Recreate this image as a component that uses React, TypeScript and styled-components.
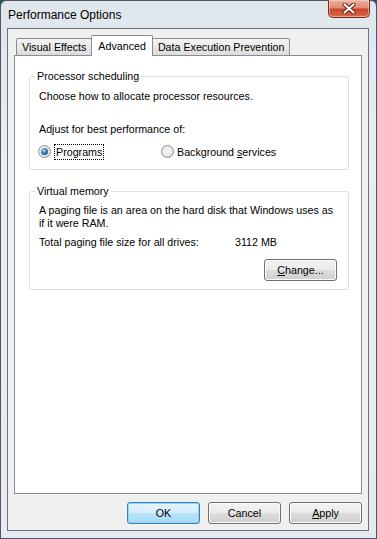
import styled, { createGlobalStyle } from "styled-components";

const GlobalStyle = createGlobalStyle`
  html, body {
    margin: 0;
    padding: 0;
    background: #24566a;
  }
  body {
    font-family: "Liberation Sans", Arial, sans-serif;
    font-size: 10.7px;
    color: #000;
  }
`;

const Frame = styled.div`
  width: 377px;
  height: 539px;
  box-sizing: border-box;
  display: flex;
  flex-direction: column;
  background: linear-gradient(180deg, #dfe6ec 0%, #eaeef2 30%, #e7ebef 100%);
  border: 1px solid #4f5862;
  border-right-color: #2c5f70;
  border-radius: 6px 6px 0 0;
  padding: 0 7px 7px 6px;
`;

const TitleBar = styled.div`
  height: 27px;
  display: flex;
  align-items: center;
  padding-left: 1px;
`;

const Caption = styled.span`
  font-size: 12px;
  color: #000;
  flex: 1;
`;

const CloseBtn = styled.div`
  align-self: flex-start;
  margin-top: -1px;
  margin-right: -1px;
  width: 42px;
  height: 18px;
  box-sizing: border-box;
  border: 1px solid #7a2c1e;
  border-top: none;
  border-radius: 0 0 5px 5px;
  background: linear-gradient(180deg, #eab2a3 0%, #df8a73 45%, #c9482c 55%, #d86a4c 100%);
  box-shadow: inset 0 0 0 1px rgba(255, 220, 210, 0.5);
  display: flex;
  align-items: center;
  justify-content: center;
`;

const Client = styled.div`
  flex: 1;
  border: 1px solid #6b747d;
  background: #f0f0f0;
  display: flex;
  flex-direction: column;
  padding: 6px 6px 0 6px;
`;

const TabStrip = styled.div`
  height: 20px;
  display: flex;
  align-items: flex-end;
  padding-left: 2px;
`;

const Tab = styled.div<{ $active?: boolean }>`
  box-sizing: border-box;
  height: ${({ $active }) => ($active ? 21 : 17)}px;
  margin-bottom: ${({ $active }) => ($active ? -1 : 0)}px;
  padding: 0 ${({ $active }) => ($active ? 6 : 5)}px;
  display: flex;
  align-items: center;
  border: 1px solid #898c95;
  border-bottom: none;
  border-radius: 2px 2px 0 0;
  background: ${({ $active }) =>
    $active ? "#fff" : "linear-gradient(180deg, #f4f4f4 0%, #e9e9e9 50%, #dcdcdc 100%)"};
  position: relative;
  z-index: ${({ $active }) => ($active ? 2 : 1)};
  & + & {
    margin-left: -1px;
  }
`;

const Panel = styled.div`
  height: 439px;
  box-sizing: border-box;
  border: 1px solid #898c95;
  background: #fff;
  padding: 13px 12px 0 14px;
`;

const Group = styled.fieldset<{ $gap?: number }>`
  margin: ${({ $gap }) => $gap ?? 0}px 0 0 0;
  width: 320px;
  box-sizing: border-box;
  border: 1px solid #d5dfe5;
  border-radius: 3px;
  padding: 0 11px 0 9px;
`;

const Legend = styled.legend`
  margin-left: -4px;
  padding: 0 2px;
  line-height: 14px;
`;

const Line = styled.p<{ $top: number; $lh?: number }>`
  margin: ${({ $top }) => $top}px 0 0 0;
  line-height: ${({ $lh }) => $lh ?? 14}px;
  white-space: nowrap;
`;

const RadioRow = styled.div`
  margin: 7px 0 9px -1px;
  display: grid;
  grid-template-columns: 123px auto;
  height: 17px;
  align-items: center;
`;

const RadioOption = styled.label`
  display: flex;
  align-items: center;
`;

const RadioDot = styled.span<{ $checked?: boolean }>`
  width: 13px;
  height: 13px;
  box-sizing: border-box;
  border-radius: 50%;
  border: 1px solid #8e8f8f;
  background: radial-gradient(circle at 45% 40%, #fbfbfb 0%, #e8e8e8 55%, #c9c9c9 100%);
  display: flex;
  align-items: center;
  justify-content: center;
  margin-right: 3px;
  &::after {
    content: "";
    display: ${({ $checked }) => ($checked ? "block" : "none")};
    width: 7px;
    height: 7px;
    border-radius: 50%;
    background: radial-gradient(circle at 40% 35%, #a9dbf8 0%, #3a7fb0 45%, #14385a 100%);
  }
`;

const Focused = styled.span`
  border: 1px dotted #000;
  padding: 0 1px;
  line-height: 14px;
`;

const StatRow = styled.div`
  margin-top: 5px;
  display: grid;
  grid-template-columns: 196px auto;
  line-height: 14px;
`;

const ButtonRow = styled.div<{ $top: number; $bottom?: number }>`
  display: flex;
  justify-content: flex-end;
  gap: 8px;
  margin: ${({ $top }) => $top}px 0 ${({ $bottom }) => $bottom ?? 0}px 0;
`;

const Button = styled.button<{ $default?: boolean }>`
  width: 73px;
  height: 22px;
  box-sizing: border-box;
  font-family: "Liberation Sans", Arial, sans-serif;
  font-size: 10.7px;
  color: #000;
  padding: 0;
  border-radius: 3px;
  border: 1px solid ${({ $default }) => ($default ? "#3c7fb1" : "#707070")};
  background: ${({ $default }) =>
    $default
      ? "linear-gradient(180deg, #e5f4fc 0%, #d3eefc 48%, #b9e3fa 52%, #a6d8f4 100%)"
      : "linear-gradient(180deg, #f3f3f3 0%, #ebebeb 48%, #dddddd 52%, #cfcfcf 100%)"};
  box-shadow: inset 0 0 0 1px ${({ $default }) => ($default ? "#90d7f7" : "#fbfbfb")};
`;

function CloseGlyph() {
  return (
    <svg width="14" height="11" viewBox="0 0 14 11">
      <path d="M2.5 1.5 L11.5 9.5 M11.5 1.5 L2.5 9.5" stroke="#5a1a10" strokeWidth="4" strokeLinecap="round" />
      <path d="M2.5 1.5 L11.5 9.5 M11.5 1.5 L2.5 9.5" stroke="#fff" strokeWidth="2.2" strokeLinecap="round" />
    </svg>
  );
}

export default function App() {
  return (
    <>
      <GlobalStyle />
      <Frame>
        <TitleBar>
          <Caption>Performance Options</Caption>
          <CloseBtn>
            <CloseGlyph />
          </CloseBtn>
        </TitleBar>
        <Client>
          <TabStrip>
            <Tab>Visual Effects</Tab>
            <Tab $active>Advanced</Tab>
            <Tab>Data Execution Prevention</Tab>
          </TabStrip>
          <Panel>
            <Group>
              <Legend>Processor scheduling</Legend>
              <Line $top={6}>Choose how to allocate processor resources.</Line>
              <Line $top={19}>Adjust for best performance of:</Line>
              <RadioRow>
                <RadioOption>
                  <RadioDot $checked />
                  <Focused>Programs</Focused>
                </RadioOption>
                <RadioOption>
                  <RadioDot />
                  <span>
                    Background <u>s</u>ervices
                  </span>
                </RadioOption>
              </RadioRow>
            </Group>
            <Group $gap={14}>
              <Legend>Virtual memory</Legend>
              <Line $top={6} $lh={13}>
                A paging file is an area on the hard disk that Windows uses as
                <br />
                if it were RAM.
              </Line>
              <StatRow>
                <span>Total paging file size for all drives:</span>
                <span>3112 MB</span>
              </StatRow>
              <ButtonRow $top={10} $bottom={8}>
                <Button>
                  <u>C</u>hange...
                </Button>
              </ButtonRow>
            </Group>
          </Panel>
          <ButtonRow $top={8}>
            <Button $default>OK</Button>
            <Button>Cancel</Button>
            <Button>
              <u>A</u>pply
            </Button>
          </ButtonRow>
        </Client>
      </Frame>
    </>
  );
}
